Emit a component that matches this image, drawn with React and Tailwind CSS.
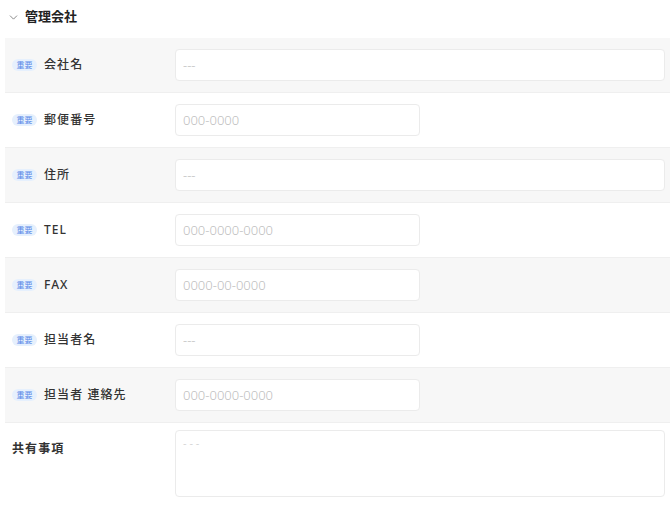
import { ChevronDown } from "lucide-react";

const fields = [
  { label: "会社名", placeholder: "---", full: true },
  { label: "郵便番号", placeholder: "000-0000" },
  { label: "住所", placeholder: "---", full: true },
  { label: "TEL", placeholder: "000-0000-0000" },
  { label: "FAX", placeholder: "0000-00-0000" },
  { label: "担当者名", placeholder: "---" },
  { label: "担当者 連絡先", placeholder: "000-0000-0000" },
];

function Badge() {
  return (
    <span className="inline-flex h-[12px] w-[25px] items-center justify-center rounded-full bg-[#e6f0fd] text-[8px] leading-none text-[#5a8ae8]">
      重要
    </span>
  );
}

export default function App() {
  return (
    <div
      className="min-h-screen bg-white pl-[5px] text-[#333]"
      style={{ fontFamily: '"Noto Sans", "Noto Sans CJK JP", sans-serif' }}
    >
      {/* Section header */}
      <div className="flex h-[34px] items-center gap-[5px] pl-[2px]">
        <ChevronDown className="h-[13px] w-[13px] text-[#666]" strokeWidth={1.4} />
        <h2 className="text-[13px] font-bold text-[#222]">管理会社</h2>
      </div>

      <div className="mt-[4px]">
        {fields.map((f, i) => (
          <div
            key={f.label}
            className={`flex h-[55px] items-center border-b border-[#efefef] ${
              i % 2 === 0 ? "bg-[#f7f7f7]" : "bg-white"
            }`}
          >
            <div className="flex w-[170px] items-center gap-[7px] pl-[7px]">
              <Badge />
              <span className="text-[12px] font-medium tracking-[0.09em] text-[#333]">
                {f.label}
              </span>
            </div>
            <input
              placeholder={f.placeholder}
              className={`h-[32px] rounded-[4px] border border-[#ebebeb] bg-white px-[7px] text-[13px] font-light text-[#333] outline-none placeholder:text-[#bdbdbd] ${
                f.full ? "w-[490px]" : "w-[245px]"
              }`}
            />
          </div>
        ))}

        {/* Shared notes */}
        <div className="flex pt-[7px]">
          <div className="w-[170px] pl-[7px] pt-[5px]">
            <span className="text-[12px] font-bold tracking-[0.09em] text-[#333]">共有事項</span>
          </div>
          <textarea
            placeholder="- - -"
            className="h-[67px] w-[490px] resize-none rounded-[4px] border border-[#ebebeb] bg-white px-[7px] py-[4px] text-[11px] font-light text-[#333] outline-none placeholder:text-[#c5c5c5]"
          />
        </div>
      </div>
    </div>
  );
}
